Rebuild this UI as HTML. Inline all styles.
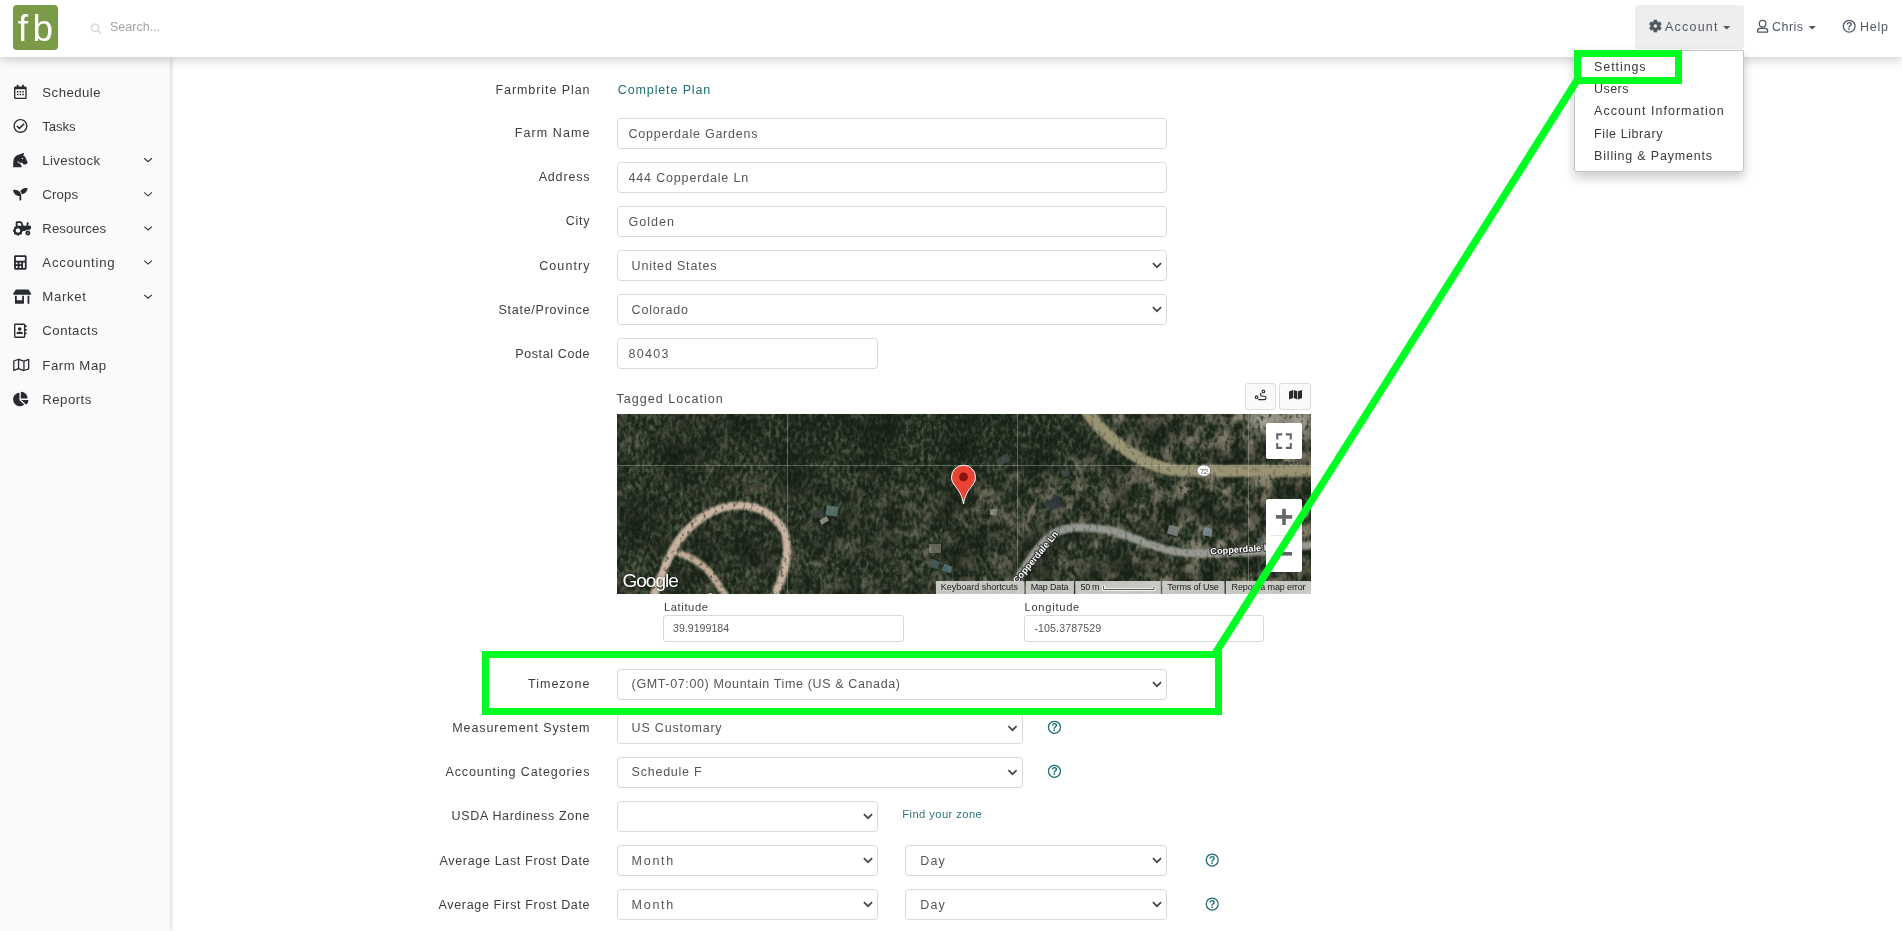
<!DOCTYPE html>
<html lang="en"><head><meta charset="utf-8"><title>Farmbrite - Account Settings</title>
<style>
html,body{margin:0;padding:0;}
body{width:1902px;height:931px;overflow:hidden;background:#fff;position:relative;font-family:"Liberation Sans",sans-serif;}
.t{position:absolute;white-space:pre;line-height:20px;font-family:"Liberation Sans",sans-serif;}
#header{position:absolute;left:0;top:0;width:1902px;height:57px;background:#fff;box-shadow:0 2px 10px rgba(30,40,50,.26);z-index:2;}
#logo{position:absolute;left:13px;top:5px;width:45px;height:45px;border-radius:4px;background:#7a9a47;}
#acct{position:absolute;left:1635px;top:5px;width:109px;height:44px;border-radius:3px;background:#eee;}
#sidebar{position:absolute;left:0;top:57px;width:170px;height:874px;background:#fafafa;box-shadow:1px 0 4px rgba(0,0,0,.18);z-index:1;}
.box{position:absolute;box-sizing:border-box;border:1px solid #d9d9d9;border-radius:3.6px;background:#fff;height:30.6px;}
.sbox{position:absolute;box-sizing:border-box;border:1px solid #d9d9d9;border-radius:3px;background:#fff;}
.btn{background:#fafafa;border-color:#dcdcdc;}
#dd{position:absolute;left:1574px;top:50px;width:170px;height:122px;background:#fff;border:1px solid #c4c4c4;box-sizing:border-box;border-radius:0 0 3px 3px;box-shadow:0 5.4px 10.8px rgba(0,0,0,.2);z-index:3;}
#texts{position:absolute;left:0;top:0;z-index:5;}
#icons{position:absolute;left:0;top:0;z-index:5;}
#overlay{position:absolute;left:0;top:0;z-index:9;}
#map{position:absolute;left:617px;top:414px;width:694px;height:180px;overflow:hidden;background:#3b4436;}

</style></head>
<body>
<div id="header"><div id="logo"></div><div id="acct"></div></div>
<div id="sidebar"></div>
<div id="dd"></div>
<div class="box" style="left:617px;top:118px;width:550px;height:31px"></div>
<div class="box" style="left:617px;top:162px;width:550px;height:31px"></div>
<div class="box" style="left:617px;top:206px;width:550px;height:31px"></div>
<div class="box" style="left:617px;top:250px;width:550px;height:31px"></div>
<div class="box" style="left:617px;top:294px;width:550px;height:31px"></div>
<div class="box" style="left:617px;top:338px;width:261px;height:31px"></div>
<div class="sbox" style="left:663px;top:615px;width:241px;height:27px"></div>
<div class="sbox" style="left:1024px;top:615px;width:240px;height:27px"></div>
<div class="box" style="left:617px;top:669px;width:550px;height:31px"></div>
<div class="box" style="left:617px;top:713px;width:406px;height:31px"></div>
<div class="box" style="left:617px;top:757px;width:406px;height:31px"></div>
<div class="box" style="left:617px;top:801px;width:261px;height:31px"></div>
<div class="box" style="left:617px;top:845px;width:261px;height:31px"></div>
<div class="box" style="left:905px;top:845px;width:262px;height:31px"></div>
<div class="box" style="left:617px;top:889px;width:261px;height:31px"></div>
<div class="box" style="left:905px;top:889px;width:262px;height:31px"></div>
<div class="sbox btn" style="left:1245px;top:383px;width:31px;height:27px"></div>
<div class="sbox btn" style="left:1279px;top:383px;width:32px;height:27px"></div>
<div id="map">
<svg width="694" height="180" viewBox="0 0 694 180" style="position:absolute;left:0;top:0">
<defs>
<filter id="forest" x="0" y="0" width="100%" height="100%" color-interpolation-filters="sRGB">
  <feTurbulence type="fractalNoise" baseFrequency="0.27 0.17" numOctaves="3" seed="7" result="fine"/>
  <feColorMatrix in="fine" type="matrix" values="0 1 0 0 0  0 1 0 0 0  0 1 0 0 0  0 0 0 0 1" result="g"/>
  <feComponentTransfer in="g">
    <feFuncR type="table" tableValues="0.06 0.07 0.09 0.13 0.19 0.27 0.35 0.40"/>
    <feFuncG type="table" tableValues="0.08 0.09 0.12 0.17 0.24 0.31 0.38 0.43"/>
    <feFuncB type="table" tableValues="0.05 0.06 0.08 0.12 0.17 0.24 0.31 0.36"/>
  </feComponentTransfer>
</filter>
<filter id="trees" x="0" y="0" width="100%" height="100%" color-interpolation-filters="sRGB">
  <feTurbulence type="fractalNoise" baseFrequency="0.27 0.17" numOctaves="3" seed="7" result="fine"/>
  <feColorMatrix in="fine" type="matrix" values="0 0 0 0 0.12  0 0 0 0 0.16  0 0 0 0 0.11  0 -4.5 0 0 2.05"/>
</filter>
<filter id="patch" x="0" y="0" width="100%" height="100%" color-interpolation-filters="sRGB">
  <feTurbulence type="fractalNoise" baseFrequency="0.07 0.055" numOctaves="3" seed="11" result="n"/>
  <feColorMatrix in="n" type="matrix" values="0 0 0 0 0.58  0 0 0 0 0.54  0 0 0 0 0.47  3.4 0 0 0 -1.45"/>
</filter>
<filter id="shade" x="0" y="0" width="100%" height="100%" color-interpolation-filters="sRGB">
  <feTurbulence type="fractalNoise" baseFrequency="0.025 0.035" numOctaves="2" seed="3"/>
  <feColorMatrix type="matrix" values="0 0 0 0 0.04  0 0 0 0 0.07  0 0 0 0 0.04  0 0 1.3 0 -0.5"/>
</filter>
<linearGradient id="rg" x1="0" x2="1" y1="0" y2="0">
  <stop offset="0" stop-color="#fff" stop-opacity="0.2"/>
  <stop offset="0.3" stop-color="#fff" stop-opacity="0.3"/>
  <stop offset="0.55" stop-color="#fff" stop-opacity="0.6"/>
  <stop offset="1" stop-color="#fff" stop-opacity="0.95"/>
</linearGradient>
<filter id="b12"><feGaussianBlur stdDeviation="12"/></filter>
<filter id="b6"><feGaussianBlur stdDeviation="6"/></filter>
<filter id="b1"><feGaussianBlur stdDeviation="0.8"/></filter>
<filter id="b05"><feGaussianBlur stdDeviation="0.7"/></filter>
<mask id="rm"><rect width="694" height="180" fill="url(#rg)"/><ellipse cx="300" cy="20" rx="190" ry="45" fill="#000" filter="url(#b12)"/></mask>
<g id="dirt" fill="none" stroke-linecap="round" stroke-linejoin="round">
  <path d="M37 181 C45 160 52 140 62 126 C75 108 95 94 115 92 C135 90 152 96 164 112 C174 128 172 150 158 181" stroke="#c9b5a2" stroke-width="7.5"/>
  <path d="M58 138 C72 142 86 150 94 160 C100 168 104 174 108 181" stroke="#c2ad98" stroke-width="6.5"/>
</g>
<g id="paved" fill="none" stroke-linecap="round" stroke-linejoin="round">
  <path d="M470 -2 C482 14 500 32 525 46 C545 56 565 58 590 57 L694 57" stroke="#9a9475" stroke-width="11"/>
  <path d="M400 166 C410 150 422 130 436 120 C450 111 480 112 505 120 C530 129 545 137 570 139 C610 141 650 137 694 131" stroke="#979992" stroke-width="7.5"/>
</g>
</defs>
<rect width="694" height="180" fill="#3b4436"/>
<rect width="694" height="180" filter="url(#forest)"/>
<g mask="url(#rm)"><rect width="694" height="180" filter="url(#patch)"/></g>
<ellipse cx="690" cy="0" rx="60" ry="28" fill="#b9b5a6" opacity="0.75" filter="url(#b6)"/>
<rect width="694" height="180" filter="url(#shade)"/>
<use href="#dirt" filter="url(#b1)"/><use href="#paved" filter="url(#b1)"/>
<rect width="694" height="180" filter="url(#trees)" opacity="0.75"/>
<use href="#dirt" filter="url(#b1)" opacity="0.3"/><use href="#paved" filter="url(#b1)" opacity="0.6"/>
<!-- buildings / clearings -->
<g filter="url(#b05)" opacity="0.75">
  <rect x="140" y="60" width="8" height="6" fill="#4a4238" transform="rotate(-10 144 63)"/>
  <rect x="128" y="70" width="22" height="10" fill="#6e6654" opacity="0.55" transform="rotate(-8 139 75)"/>
  <rect x="209" y="92" width="12" height="10" fill="#63807c" transform="rotate(8 215 97)"/>
  <rect x="197" y="96" width="9" height="8" fill="#3c4446" transform="rotate(8 201 100)"/>
  <rect x="203" y="104" width="8" height="5" fill="#c9cbc6" opacity="0.8" transform="rotate(-30 207 106)"/>
  <rect x="313" y="146" width="9" height="8" fill="#4f6168" transform="rotate(20 317 150)"/>
  <rect x="326" y="151" width="9" height="7" fill="#5a7d7c" transform="rotate(20 330 154)"/>
  <rect x="312" y="130" width="12" height="9" fill="#9a9488" opacity="0.7"/>
  <rect x="380" y="42" width="13" height="8" fill="#4a4e52" transform="rotate(-28 386 46)"/>
  <rect x="430" y="84" width="14" height="11" fill="#2f3640" transform="rotate(-25 437 89)"/>
  <rect x="373" y="95" width="7" height="6" fill="#a9a59b" opacity="0.8"/>
  <rect x="446" y="56" width="7" height="6" fill="#3e4a4c" transform="rotate(20 449 59)"/>
  <rect x="551" y="112" width="11" height="9" fill="#8f9290" transform="rotate(15 556 116)"/>
  <rect x="586" y="114" width="9" height="8" fill="#8d99a6" transform="rotate(10 590 118)"/>
  <rect x="640" y="124" width="7" height="7" fill="#59616a"/>
</g>
<!-- tile seams -->
<g stroke="#cfcfc0" stroke-opacity="0.35" stroke-width="1">
  <line x1="170.5" y1="0" x2="170.5" y2="180"/><line x1="400.5" y1="0" x2="400.5" y2="180"/><line x1="631.5" y1="0" x2="631.5" y2="180"/>
  <line x1="0" y1="51.5" x2="694" y2="51.5"/>
</g>
<!-- road labels -->
<g font-family="Liberation Sans, sans-serif" font-weight="bold" font-size="9.1" fill="#fff" stroke="#2a2a2a" stroke-width="2" stroke-linejoin="round" paint-order="stroke" letter-spacing="0.1">
  <text transform="translate(400 170) rotate(-50)">Copperdale Ln</text>
  <text transform="translate(593.5 140.5) rotate(-4)" font-size="9.1">Copperdale Ln</text>
  <text transform="translate(91 188) rotate(-20)" font-size="11">S</text>
</g>
<!-- route shield -->
<ellipse cx="586.8" cy="56.6" rx="7" ry="5.8" fill="#fff" stroke="#6a6a6a" stroke-width="1"/>
<text x="586.8" y="59.6" text-anchor="middle" font-family="Liberation Sans, sans-serif" font-size="8" fill="#555" letter-spacing="-0.3">72</text>
<!-- pin -->
<g transform="translate(346.5 51)">
  <path d="M0 39 C-1.2 31 -4 26.5 -8 21.5 C-10.6 18.2 -12 15.6 -12 12.2 A12 12 0 0 1 12 12.2 C12 15.6 10.6 18.2 8 21.5 C4 26.5 1.2 31 0 39 Z" fill="#ea4335" stroke="#fff" stroke-width="1" stroke-linejoin="round"/>
  <circle cx="0" cy="11.9" r="4.4" fill="#871512"/>
</g>
<!-- google logo -->
<text x="5.5" y="172.8" font-family="Liberation Sans, sans-serif" font-size="19" fill="#fff" letter-spacing="-1.0" style="text-shadow:0 0 2px rgba(0,0,0,.6)">Google</text>
<!-- attribution -->
<g fill="#d2d2ce" fill-opacity="0.93">
  <rect x="319" y="167" width="88.3" height="13"/>
  <rect x="409" y="167" width="47.9" height="13"/>
  <rect x="458.3" y="167" width="85.5" height="13"/>
  <rect x="545.3" y="167" width="62.2" height="13"/>
  <rect x="609" y="167" width="85" height="13"/>
</g>
<path d="M486.5 171.2 V175.5 H537 V171.2" fill="none" stroke="#fff" stroke-width="2.4"/>
<path d="M486.5 171.8 V175.5 H537 V171.8" fill="none" stroke="#5a5a5a" stroke-width="1"/>
<!-- controls -->
<g fill="#fff">
  <rect x="649" y="9" width="36" height="36" rx="2"/>
  <rect x="649" y="85" width="36" height="73" rx="2"/>
</g>
<g fill="none" stroke="#666" stroke-width="2.1">
  <path d="M660.2 25.4 V20.4 H665.2 M668.8 20.4 H673.8 V25.4 M673.8 28.9 V33.9 H668.8 M665.2 33.9 H660.2 V28.9"/>
</g>
<g fill="#666">
  <rect x="658.9" y="101.1" width="16.2" height="3.6"/><rect x="665.2" y="94.8" width="3.6" height="16.2"/>
  <rect x="658.9" y="138" width="16.2" height="3.6"/>
</g>
<rect x="654" y="121" width="27" height="1" fill="#e6e6e6"/>
</svg>
</div>

<svg id="icons" width="1902" height="931" viewBox="0 0 1902 931">
<path transform="translate(14.06 84.65) scale(0.028125)" fill="#272b30" fill-rule="evenodd" d="M96 12 a12 12 0 0 1 12 -12 h40 a12 12 0 0 1 12 12 v52 h128 v-52 a12 12 0 0 1 12 -12 h40 a12 12 0 0 1 12 12 v52 h48 a48 48 0 0 1 48 48 v352 a48 48 0 0 1 -48 48 h-352 a48 48 0 0 1 -48 -48 v-352 a48 48 0 0 1 48 -48 h48 z M48 160 v298 a6 6 0 0 0 6 6 h340 a6 6 0 0 0 6 -6 v-298 z M100 226 h56 v56 h-56 z M196 226 h56 v56 h-56 z M292 226 h56 v56 h-56 z M100 322 h56 v56 h-56 z M196 322 h56 v56 h-56 z M292 322 h56 v56 h-56 z"/>
<path transform="translate(13.30 118.78) scale(0.028125)" fill="#272b30" fill-rule="nonzero" d="M256 8C119.033 8 8 119.033 8 256s111.033 248 248 248 248-111.033 248-248S392.967 8 256 8zm0 48c110.532 0 200 89.451 200 200 0 110.532-89.451 200-200 200-110.532 0-200-89.451-200-200 0-110.532 89.451-200 200-200m140.204 130.267l-22.536-22.718c-4.667-4.705-12.265-4.736-16.97-.068L215.346 303.697l-59.792-60.277c-4.667-4.705-12.265-4.736-16.97-.069l-22.719 22.536c-4.705 4.667-4.736 12.265-.068 16.971l90.781 91.516c4.667 4.705 12.265 4.736 16.97.068l172.589-171.204c4.704-4.668 4.734-12.266.067-16.971z"/>
<path transform="translate(13.20 152.91) scale(0.028125)" fill="#272b30" fill-rule="nonzero" d="M509.8 332.5l-69.9-164.3c-14.9-41.2-50.4-71-93-79.2 18-10.6 46.3-35.9 34.2-82.3-1.3-5-7.1-7.9-12-6.100L166.900 76.300C35.900 123.400 0 238.900 0 398.800V480c0 17.700 14.300 32 32 32h236.200c23.800 0 39.300-25 28.600-46.300L256 384v-.7c-45.600-3.500-84.600-30.700-104.300-69.600-1.600-3.100-.9-6.900 1.600-9.300l12.100-12.100c3.900-3.900 10.600-2.700 12.900 2.400 14.800 33.700 48.200 57.400 87.400 57.400 17.200 0 33-5.100 46.800-13.200l46 63.900c6 8.400 15.700 13.300 26 13.300h50.300c8.500 0 16.600-3.400 22.600-9.400l45.300-39.800c8.900-9.100 11.700-22.600 7.100-34.400zM328 224c-13.300 0-24-10.700-24-24s10.700-24 24-24 24 10.700 24 24-10.700 24-24 24z"/>
<path transform="translate(13.15 187.04) scale(0.028125)" fill="#272b30" fill-rule="nonzero" d="M64 96H0c0 123.7 100.3 224 224 224v144c0 8.8 7.2 16 16 16h32c8.8 0 16-7.2 16-16V320C288 196.3 187.700 96 64 96zm384-64c-84.200 0-157.400 46.500-195.700 115.200 27.700 30.200 48.200 66.900 59 107.600C424 243.100 512 147.900 512 32h-64z"/>
<path transform="translate(13.03 221.17) scale(0.028125)" fill="#272b30" fill-rule="nonzero" d="M528 336c-48.600 0-88 39.400-88 88s39.400 88 88 88 88-39.400 88-88-39.400-88-88-88zm0 112c-13.230 0-24-10.770-24-24s10.770-24 24-24 24 10.770 24 24-10.770 24-24 24zm80-288h-64v-40.200c0-14.120 4.700-27.760 13.150-38.840 4.420-5.800 3.550-14.060-1.320-19.490L534.200 37.830c-6.660-7.450-18.320-6.920-24.700.780C490.580 61.400 480 90.100 480 119.800V160H377.670L321.580 29.140A47.914 47.914 0 0 0 277.450 0H144c-26.470 0-48 21.530-48 48v146.520c-8.630-6.730-20.960-6.460-28.890 1.470L36 227.100c-8.590 8.590-8.590 22.520 0 31.110l5.060 5.060c-4.990 9.260-8.960 18.820-11.910 28.720H22c-12.150 0-22 9.850-22 22v44c0 12.150 9.850 22 22 22h7.140c2.960 9.910 6.920 19.460 11.910 28.730l-5.060 5.060c-8.590 8.590-8.590 22.520 0 31.110L67.100 476c8.590 8.590 22.520 8.590 31.110 0l5.060-5.060c9.260 4.990 18.820 8.960 28.720 11.910V490c0 12.150 9.850 22 22 22h44c12.150 0 22-9.850 22-22v-7.140c9.900-2.950 19.460-6.920 28.720-11.910l5.060 5.060c8.590 8.590 22.520 8.590 31.110 0l31.110-31.110c8.590-8.590 8.590-22.520 0-31.110l-5.060-5.060c4.990-9.260 8.960-18.820 11.910-28.720H330c12.150 0 22-9.850 22-22v-6h80.540c21.910-28.990 56.320-48 95.460-48 18.640 0 36.070 4.610 51.800 12.200l50.820-50.820c6-6 9.370-14.140 9.370-22.630V192c.01-17.670-14.320-32-31.990-32zM176 416c-44.180 0-80-35.820-80-80s35.820-80 80-80 80 35.820 80 80-35.820 80-80 80zm22-256h-38V64h106.890l41.150 96H198z"/>
<path transform="translate(14.06 255.30) scale(0.028125)" fill="#272b30" fill-rule="nonzero" d="M400 0H48C22.4 0 0 22.4 0 48v416c0 25.600 22.400 48 48 48h352c25.600 0 48-22.400 48-48V48c0-25.600-22.400-48-48-48zM128 435.200c0 6.400-6.400 12.800-12.800 12.800H76.800c-6.400 0-12.800-6.400-12.800-12.800v-38.400c0-6.400 6.400-12.800 12.800-12.800h38.400c6.400 0 12.800 6.400 12.800 12.800v38.400zm0-128c0 6.400-6.400 12.800-12.800 12.800H76.800c-6.400 0-12.800-6.400-12.800-12.800v-38.400c0-6.400 6.400-12.800 12.800-12.800h38.400c6.400 0 12.800 6.400 12.800 12.800v38.400zm128 128c0 6.400-6.400 12.800-12.800 12.800h-38.400c-6.400 0-12.800-6.400-12.800-12.800v-38.400c0-6.400 6.400-12.800 12.800-12.800h38.400c6.400 0 12.800 6.400 12.800 12.800v38.400zm0-128c0 6.400-6.400 12.800-12.800 12.800h-38.400c-6.400 0-12.800-6.400-12.800-12.800v-38.400c0-6.400 6.400-12.800 12.800-12.800h38.400c6.400 0 12.800 6.400 12.800 12.800v38.400zm128 128c0 6.400-6.400 12.800-12.800 12.800h-38.400c-6.400 0-12.800-6.400-12.800-12.800V268.800c0-6.400 6.400-12.800 12.800-12.800h38.400c6.400 0 12.800 6.400 12.800 12.800v166.400zm0-256c0 6.400-6.400 12.800-12.800 12.800H76.800c-6.400 0-12.800-6.400-12.800-12.800V76.800C64 70.400 70.400 64 76.800 64h294.400c6.400 0 12.800 6.400 12.800 12.800v102.400z"/>
<path transform="translate(13.15 289.43) scale(0.028125)" fill="#272b30" fill-rule="nonzero" d="M320 384H128V224H64v256c0 17.700 14.300 32 32 32h256c17.700 0 32-14.300 32-32V224h-64v160zm314.600-241.800l-85.300-128c-6-8.900-16-14.200-26.700-14.200H117.400c-10.700 0-20.700 5.300-26.600 14.200l-85.300 128c-14.200 21.300 1 49.800 26.600 49.800H608c25.500 0 40.700-28.500 26.600-49.800zM512 496c0 8.800 7.200 16 16 16h32c8.800 0 16-7.200 16-16V224h-64v272z"/>
<path transform="translate(14.06 323.56) scale(0.028125)" fill="#272b30" fill-rule="evenodd" d="M48 0 h304 a48 48 0 0 1 48 48 v416 a48 48 0 0 1 -48 48 h-304 a48 48 0 0 1 -48 -48 v-416 a48 48 0 0 1 48 -48 z M48 48 v416 h304 v-416 z M200 256 a64 64 0 1 0 -0.1 0 z M88 368 v-19 c0 -37 30 -61 67 -61 h90 c37 0 67 24 67 61 v19 z M400 64 h36 a12 12 0 0 1 12 12 v40 a12 12 0 0 1 -12 12 h-36 z M400 192 h36 a12 12 0 0 1 12 12 v40 a12 12 0 0 1 -12 12 h-36 z M400 320 h36 a12 12 0 0 1 12 12 v40 a12 12 0 0 1 -12 12 h-36 z"/>
<g transform="translate(13.15 357.69) scale(0.028125)" fill="none" stroke="#272b30" stroke-width="46" stroke-linejoin="round"><path d="M24 118 L192 56 L384 120 L552 58 V394 L384 456 L192 392 L24 454 Z M192 56 V392 M384 120 V456"/></g>
<path transform="translate(13.15 391.82) scale(0.028125)" fill="#272b30" fill-rule="nonzero" d="M527.79 288H290.5l158.030 158.030c6.040 6.040 15.980 6.530 22.190.680 38.700-36.460 65.320-85.610 73.130-140.860 1.340-9.460-6.510-17.850-16.060-17.850zm-15.830-64.800C503.720 103.740 408.260 8.280 288.800.040 279.680-.590 272 7.100 272 16.240V240h223.770c9.140 0 16.820-7.680 16.190-16.800zM224 288V50.710c0-9.550-8.390-17.400-17.840-16.060C86.990 51.490-4.100 155.600.140 280.370 4.500 408.510 114.830 513.590 243.030 511.980c50.400-.630 96.970-16.870 135.260-44.030 7.900-5.600 8.420-17.230 1.570-24.080L224 288z"/>
<path d="M144.3 158.30 L148.1 161.70 L151.9 158.30" fill="none" stroke="#333" stroke-width="1.15"/>
<path d="M144.3 192.43 L148.1 195.83 L151.9 192.43" fill="none" stroke="#333" stroke-width="1.15"/>
<path d="M144.3 226.56 L148.1 229.96 L151.9 226.56" fill="none" stroke="#333" stroke-width="1.15"/>
<path d="M144.3 260.69 L148.1 264.09 L151.9 260.69" fill="none" stroke="#333" stroke-width="1.15"/>
<path d="M144.3 294.82 L148.1 298.22 L151.9 294.82" fill="none" stroke="#333" stroke-width="1.15"/>
<path d="M1152.90 263.10 L1157.00 267.20 L1161.10 263.10" fill="none" stroke="#484848" stroke-width="1.75"/>
<path d="M1152.90 307.10 L1157.00 311.20 L1161.10 307.10" fill="none" stroke="#484848" stroke-width="1.75"/>
<path d="M1152.90 682.10 L1157.00 686.20 L1161.10 682.10" fill="none" stroke="#484848" stroke-width="1.75"/>
<path d="M1008.40 726.10 L1012.50 730.20 L1016.60 726.10" fill="none" stroke="#484848" stroke-width="1.75"/>
<path d="M1008.40 770.10 L1012.50 774.20 L1016.60 770.10" fill="none" stroke="#484848" stroke-width="1.75"/>
<path d="M863.90 814.10 L868.00 818.20 L872.10 814.10" fill="none" stroke="#484848" stroke-width="1.75"/>
<path d="M863.90 858.10 L868.00 862.20 L872.10 858.10" fill="none" stroke="#484848" stroke-width="1.75"/>
<path d="M1152.90 858.10 L1157.00 862.20 L1161.10 858.10" fill="none" stroke="#484848" stroke-width="1.75"/>
<path d="M863.90 902.10 L868.00 906.20 L872.10 902.10" fill="none" stroke="#484848" stroke-width="1.75"/>
<path d="M1152.90 902.10 L1157.00 906.20 L1161.10 902.10" fill="none" stroke="#484848" stroke-width="1.75"/>
<circle cx="1054.45" cy="727.3" r="6.0" fill="none" stroke="#1d6d70" stroke-width="1.25"/>
<text x="1054.45" y="731.08" text-anchor="middle" font-family="Liberation Sans, sans-serif" font-weight="bold" font-size="10.5" fill="#1d6d70">?</text>
<circle cx="1054.45" cy="771.3" r="6.0" fill="none" stroke="#1d6d70" stroke-width="1.25"/>
<text x="1054.45" y="775.08" text-anchor="middle" font-family="Liberation Sans, sans-serif" font-weight="bold" font-size="10.5" fill="#1d6d70">?</text>
<circle cx="1212.2" cy="860.0" r="6.0" fill="none" stroke="#1d6d70" stroke-width="1.25"/>
<text x="1212.2" y="863.78" text-anchor="middle" font-family="Liberation Sans, sans-serif" font-weight="bold" font-size="10.5" fill="#1d6d70">?</text>
<circle cx="1212.2" cy="904.0" r="6.0" fill="none" stroke="#1d6d70" stroke-width="1.25"/>
<text x="1212.2" y="907.78" text-anchor="middle" font-family="Liberation Sans, sans-serif" font-weight="bold" font-size="10.5" fill="#1d6d70">?</text>
<path d="M1653.88 21.60 L1653.93 20.03 L1656.87 20.03 L1656.92 21.60 L1658.49 22.51 L1659.88 21.76 L1661.35 24.32 L1660.01 25.15 L1660.01 26.95 L1661.35 27.78 L1659.88 30.34 L1658.49 29.59 L1656.92 30.50 L1656.87 32.07 L1653.93 32.07 L1653.88 30.50 L1652.31 29.59 L1650.92 30.34 L1649.45 27.78 L1650.79 26.95 L1650.79 25.15 L1649.45 24.32 L1650.92 21.76 L1652.31 22.51 Z M1657.40 26.05 a2 2 0 1 0 -4 0 a2 2 0 1 0 4 0 Z" fill="#4f5761" fill-rule="evenodd" stroke="#4f5761" stroke-width="0.6" stroke-linejoin="round"/>
<path d="M1723.1 25.9 h7.2 l-3.6 3.6 z" fill="#4f5761"/>
<path d="M1808.7 25.9 h7.2 l-3.6 3.6 z" fill="#4f5761"/>
<circle cx="1762.6" cy="23.7" r="3.3" fill="none" stroke="#4f5761" stroke-width="1.25"/>
<path d="M1757.5 32.1 v-1.2 a2.6 2.6 0 0 1 2.6 -2.6 h5 a2.6 2.6 0 0 1 2.6 2.6 v1.2 z" fill="none" stroke="#4f5761" stroke-width="1.25" stroke-linejoin="round"/>
<circle cx="1849.2" cy="26.2" r="5.85" fill="none" stroke="#4f5761" stroke-width="1.25"/>
<text x="1849.2" y="29.98" text-anchor="middle" font-family="Liberation Sans, sans-serif" font-weight="bold" font-size="10.5" fill="#4f5761">?</text>
<circle cx="95.1" cy="27.7" r="3.6" fill="none" stroke="#dcdcdc" stroke-width="1.8"/>
<path d="M97.9 30.5 L100.6 33.2" stroke="#dcdcdc" stroke-width="2" stroke-linecap="round"/>
<g fill="none" stroke="#2b2b2b" stroke-width="1.1"><circle cx="1256.6" cy="397.2" r="1.3"/><circle cx="1263.4" cy="391.4" r="1.3"/><path d="M1258.5 399.6 h5.8 a1.7 1.7 0 0 0 0 -3.4 h-2.2 a1.6 1.6 0 0 1 -1.2 -2.7" stroke-linecap="round"/></g>
<path d="M1289 391.4 l4 -1.4 v8.1 l-4 1.4 z M1293.7 390 l3.6 1.3 v8.1 l-3.6 -1.3 z M1298 391.3 l4 -1.4 v8.1 l-4 1.4 z" fill="#2b2b2b"/>
</svg>
<div id="texts">
<span class="t" style="left:110.00px;top:17.00px;font-size:12.5px;color:#a6a6a6;letter-spacing:0.021px;">Search...</span>
<span class="t" style="left:1665.00px;top:17.00px;font-size:12.5px;color:#525a63;letter-spacing:1.221px;">Account</span>
<span class="t" style="left:1772.00px;top:17.00px;font-size:12.5px;color:#525a63;letter-spacing:0.482px;">Chris</span>
<span class="t" style="left:1859.90px;top:17.00px;font-size:12.5px;color:#525a63;letter-spacing:0.760px;">Help</span>
<span class="t" style="left:1594.10px;top:57.00px;font-size:12.5px;color:#3a3a3a;letter-spacing:0.904px;">Settings</span>
<span class="t" style="left:1594.10px;top:79.00px;font-size:12.5px;color:#3a3a3a;letter-spacing:0.411px;">Users</span>
<span class="t" style="left:1594.10px;top:101.00px;font-size:12.5px;color:#3a3a3a;letter-spacing:1.029px;">Account Information</span>
<span class="t" style="left:1594.10px;top:124.00px;font-size:12.5px;color:#3a3a3a;letter-spacing:0.588px;">File Library</span>
<span class="t" style="left:1594.10px;top:146.00px;font-size:12.5px;color:#3a3a3a;letter-spacing:0.805px;">Billing &amp; Payments</span>
<span class="t" style="left:42.30px;top:83.00px;font-size:13.2px;color:#3b3b3b;letter-spacing:0.471px;">Schedule</span>
<span class="t" style="left:42.30px;top:117.00px;font-size:13.2px;color:#3b3b3b;letter-spacing:-0.105px;">Tasks</span>
<span class="t" style="left:42.30px;top:151.00px;font-size:13.2px;color:#3b3b3b;letter-spacing:0.352px;">Livestock</span>
<span class="t" style="left:42.30px;top:185.00px;font-size:13.2px;color:#3b3b3b;letter-spacing:0.153px;">Crops</span>
<span class="t" style="left:42.30px;top:219.00px;font-size:13.2px;color:#3b3b3b;letter-spacing:0.094px;">Resources</span>
<span class="t" style="left:42.30px;top:253.00px;font-size:13.2px;color:#3b3b3b;letter-spacing:0.794px;">Accounting</span>
<span class="t" style="left:42.30px;top:287.00px;font-size:13.2px;color:#3b3b3b;letter-spacing:0.678px;">Market</span>
<span class="t" style="left:42.30px;top:321.00px;font-size:13.2px;color:#3b3b3b;letter-spacing:0.493px;">Contacts</span>
<span class="t" style="left:42.30px;top:356.00px;font-size:13.2px;color:#3b3b3b;letter-spacing:0.529px;">Farm Map</span>
<span class="t" style="left:42.30px;top:390.00px;font-size:13.2px;color:#3b3b3b;letter-spacing:0.469px;">Reports</span>
<span class="t" style="left:495.50px;top:80.00px;font-size:12.5px;color:#3d3d3d;letter-spacing:0.924px;">Farmbrite Plan</span>
<span class="t" style="left:617.80px;top:80.00px;font-size:12.5px;color:#1f6d6f;letter-spacing:0.875px;">Complete Plan</span>
<span class="t" style="left:514.70px;top:123.00px;font-size:12.5px;color:#3d3d3d;letter-spacing:1.102px;">Farm Name</span>
<span class="t" style="left:628.50px;top:124.00px;font-size:12.5px;color:#555;letter-spacing:0.756px;">Copperdale Gardens</span>
<span class="t" style="left:538.70px;top:167.00px;font-size:12.5px;color:#3d3d3d;letter-spacing:0.823px;">Address</span>
<span class="t" style="left:628.50px;top:168.00px;font-size:12.5px;color:#555;letter-spacing:0.835px;">444 Copperdale Ln</span>
<span class="t" style="left:565.70px;top:211.00px;font-size:12.5px;color:#3d3d3d;letter-spacing:0.756px;">City</span>
<span class="t" style="left:628.50px;top:212.00px;font-size:12.5px;color:#555;letter-spacing:1.017px;">Golden</span>
<span class="t" style="left:539.20px;top:256.00px;font-size:12.5px;color:#3d3d3d;letter-spacing:1.086px;">Country</span>
<span class="t" style="left:631.60px;top:256.00px;font-size:12.5px;color:#555;letter-spacing:0.821px;">United States</span>
<span class="t" style="left:498.40px;top:300.00px;font-size:12.5px;color:#3d3d3d;letter-spacing:0.754px;">State/Province</span>
<span class="t" style="left:631.60px;top:300.00px;font-size:12.5px;color:#555;letter-spacing:0.795px;">Colorado</span>
<span class="t" style="left:515.20px;top:344.00px;font-size:12.5px;color:#3d3d3d;letter-spacing:0.619px;">Postal Code</span>
<span class="t" style="left:628.50px;top:344.00px;font-size:12.5px;color:#555;letter-spacing:1.284px;">80403</span>
<span class="t" style="left:616.50px;top:389.00px;font-size:12.5px;color:#4c4c4c;letter-spacing:1.032px;">Tagged Location</span>
<span class="t" style="left:663.90px;top:597.00px;font-size:11.2px;color:#3d3d3d;letter-spacing:0.613px;">Latitude</span>
<span class="t" style="left:1024.50px;top:597.00px;font-size:11.2px;color:#3d3d3d;letter-spacing:0.705px;">Longitude</span>
<span class="t" style="left:673.10px;top:618.00px;font-size:10.6px;color:#555;letter-spacing:0.002px;">39.9199184</span>
<span class="t" style="left:1034.40px;top:618.00px;font-size:10.6px;color:#555;letter-spacing:0.119px;">-105.3787529</span>
<span class="t" style="left:528.00px;top:674.00px;font-size:12.5px;color:#3d3d3d;letter-spacing:1.011px;">Timezone</span>
<span class="t" style="left:452.20px;top:718.00px;font-size:12.5px;color:#3d3d3d;letter-spacing:0.925px;">Measurement System</span>
<span class="t" style="left:445.40px;top:762.00px;font-size:12.5px;color:#3d3d3d;letter-spacing:0.916px;">Accounting Categories</span>
<span class="t" style="left:451.50px;top:806.00px;font-size:12.5px;color:#3d3d3d;letter-spacing:0.680px;">USDA Hardiness Zone</span>
<span class="t" style="left:439.50px;top:851.00px;font-size:12.5px;color:#3d3d3d;letter-spacing:0.670px;">Average Last Frost Date</span>
<span class="t" style="left:438.60px;top:895.00px;font-size:12.5px;color:#3d3d3d;letter-spacing:0.651px;">Average First Frost Date</span>
<span class="t" style="left:631.60px;top:674.00px;font-size:12.5px;color:#555;letter-spacing:0.628px;">(GMT-07:00) Mountain Time (US &amp; Canada)</span>
<span class="t" style="left:631.60px;top:718.00px;font-size:12.5px;color:#555;letter-spacing:0.793px;">US Customary</span>
<span class="t" style="left:631.60px;top:762.00px;font-size:12.5px;color:#555;letter-spacing:0.763px;">Schedule F</span>
<span class="t" style="left:902.30px;top:804.00px;font-size:11.2px;color:#2f7476;letter-spacing:0.422px;">Find your zone</span>
<span class="t" style="left:631.60px;top:851.00px;font-size:12.5px;color:#555;letter-spacing:1.738px;">Month</span>
<span class="t" style="left:920.20px;top:851.00px;font-size:12.5px;color:#555;letter-spacing:1.183px;">Day</span>
<span class="t" style="left:631.60px;top:895.00px;font-size:12.5px;color:#555;letter-spacing:1.738px;">Month</span>
<span class="t" style="left:920.20px;top:895.00px;font-size:12.5px;color:#555;letter-spacing:1.183px;">Day</span>
<span class="t" style="left:940.80px;top:577.00px;font-size:9px;color:#1c1c1c;letter-spacing:-0.015px;">Keyboard shortcuts</span>
<span class="t" style="left:1030.70px;top:577.00px;font-size:9px;color:#1c1c1c;letter-spacing:-0.176px;">Map Data</span>
<span class="t" style="left:1080.60px;top:577.00px;font-size:9px;color:#1c1c1c;letter-spacing:-0.339px;">50 m</span>
<span class="t" style="left:1167.30px;top:577.00px;font-size:9px;color:#1c1c1c;letter-spacing:-0.138px;">Terms of Use</span>
<span class="t" style="left:1231.50px;top:577.00px;font-size:9px;color:#1c1c1c;letter-spacing:-0.114px;">Report a map error</span>
<span class="t" style="left:17.70px;top:19.00px;font-size:37px;color:#fff;letter-spacing:0.000px;letter-spacing:4.6px;">fb</span>
</div>
<svg id="overlay" width="1902" height="931" viewBox="0 0 1902 931" fill="none" stroke="#00fe23" stroke-width="7">
<line x1="1576.9" y1="80.5" x2="1214.2" y2="655" stroke-width="7.4"/>
<rect x="1577.5" y="53.5" width="101" height="27"/>
<rect x="485.5" y="654.5" width="733" height="57"/>
</svg>

</body></html>
